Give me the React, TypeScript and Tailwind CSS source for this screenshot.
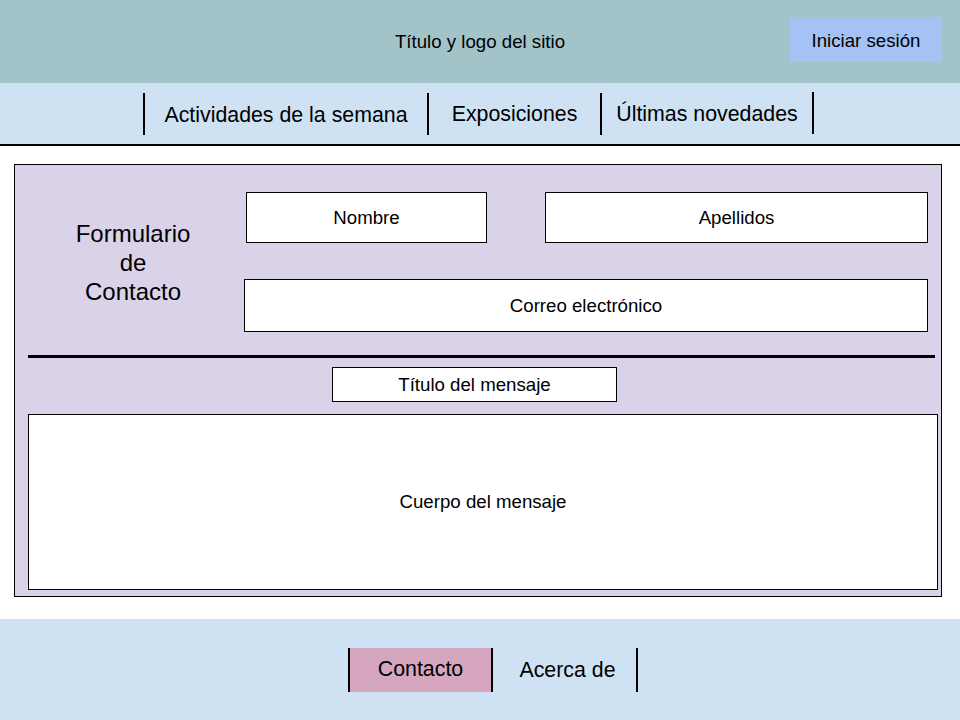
export default function App() {
  return (
    <div className="w-[960px] h-[720px] bg-white text-black font-['Liberation_Sans',Arial,sans-serif] overflow-hidden">
      {/* Header */}
      <header className="h-[83px] bg-[#a2c4c9] grid grid-cols-[1fr_auto_1fr]">
        <div />
        <div className="self-center text-[18.67px] leading-none pt-[2px]">Título y logo del sitio</div>
        <div className="flex justify-end pr-[18px]">
          <button className="mt-[17px] w-[152px] h-[45px] bg-[#a4c2f4] text-[18.67px] pt-[2px]">Iniciar sesión</button>
        </div>
      </header>

      {/* Nav */}
      <nav className="h-[63px] bg-[#cfe2f3] border-b-2 border-black flex items-center pl-[143px]">
        <div className="w-[2px] h-[42px] bg-black mt-[1px]" />
        <div className="w-[282px] text-center text-[21.33px] leading-none pt-[5px]">Actividades de la semana</div>
        <div className="w-[2px] h-[42px] bg-black mt-[1px]" />
        <div className="w-[171px] text-center text-[21.33px] leading-none pt-[3px]">Exposiciones</div>
        <div className="w-[2px] h-[42px] bg-black" />
        <div className="w-[210px] text-center text-[21.33px] leading-none pt-[3px]">Últimas novedades</div>
        <div className="w-[2px] h-[42px] bg-black -mt-[2px]" />
      </nav>

      {/* Form */}
      <main className="mt-[18px] ml-[14px] w-[928px] h-[433px] border border-black bg-[#d9d2e9] pt-[27px] pl-[13px]">
        <div className="flex h-[140px]">
          <div className="w-[210px] flex items-center justify-center text-center text-[24px] leading-[29px]">
            Formulario
            <br />
            de
            <br />
            Contacto
          </div>
          <div className="ml-[6px] w-[684px] flex flex-col">
            <div className="flex">
              <div className="ml-[2px] w-[241px] h-[51px] bg-white border border-black flex items-center justify-center text-[18.67px]">
                Nombre
              </div>
              <div className="ml-auto w-[383px] h-[51px] bg-white border border-black flex items-center justify-center text-[18.67px]">
                Apellidos
              </div>
            </div>
            <div className="mt-[36px] w-[684px] h-[53px] bg-white border border-black flex items-center justify-center text-[18.67px]">
              Correo electrónico
            </div>
          </div>
        </div>
        <div className="mt-[23px] w-[907px] h-[3px] bg-black" />
        <div className="mt-[9px] ml-[304px] w-[285px] h-[35px] bg-white border border-black flex items-center justify-center text-[18.67px]">
          Título del mensaje
        </div>
        <div className="mt-[12px] w-[910px] h-[176px] bg-white border border-black flex items-center justify-center text-[18.67px]">
          Cuerpo del mensaje
        </div>
      </main>

      {/* Footer */}
      <footer className="mt-[22px] h-[101px] bg-[#cfe2f3] flex items-center pl-[348px]">
        <div className="w-[145px] h-[44px] bg-[#d5a6bd] border-x-2 border-black flex items-center justify-center text-[21.33px]">
          Contacto
        </div>
        <div className="w-[143px] text-center text-[21.33px] pt-[2px] pl-[6px]">Acerca de</div>
        <div className="w-[2px] h-[44px] bg-black" />
      </footer>
    </div>
  );
}
